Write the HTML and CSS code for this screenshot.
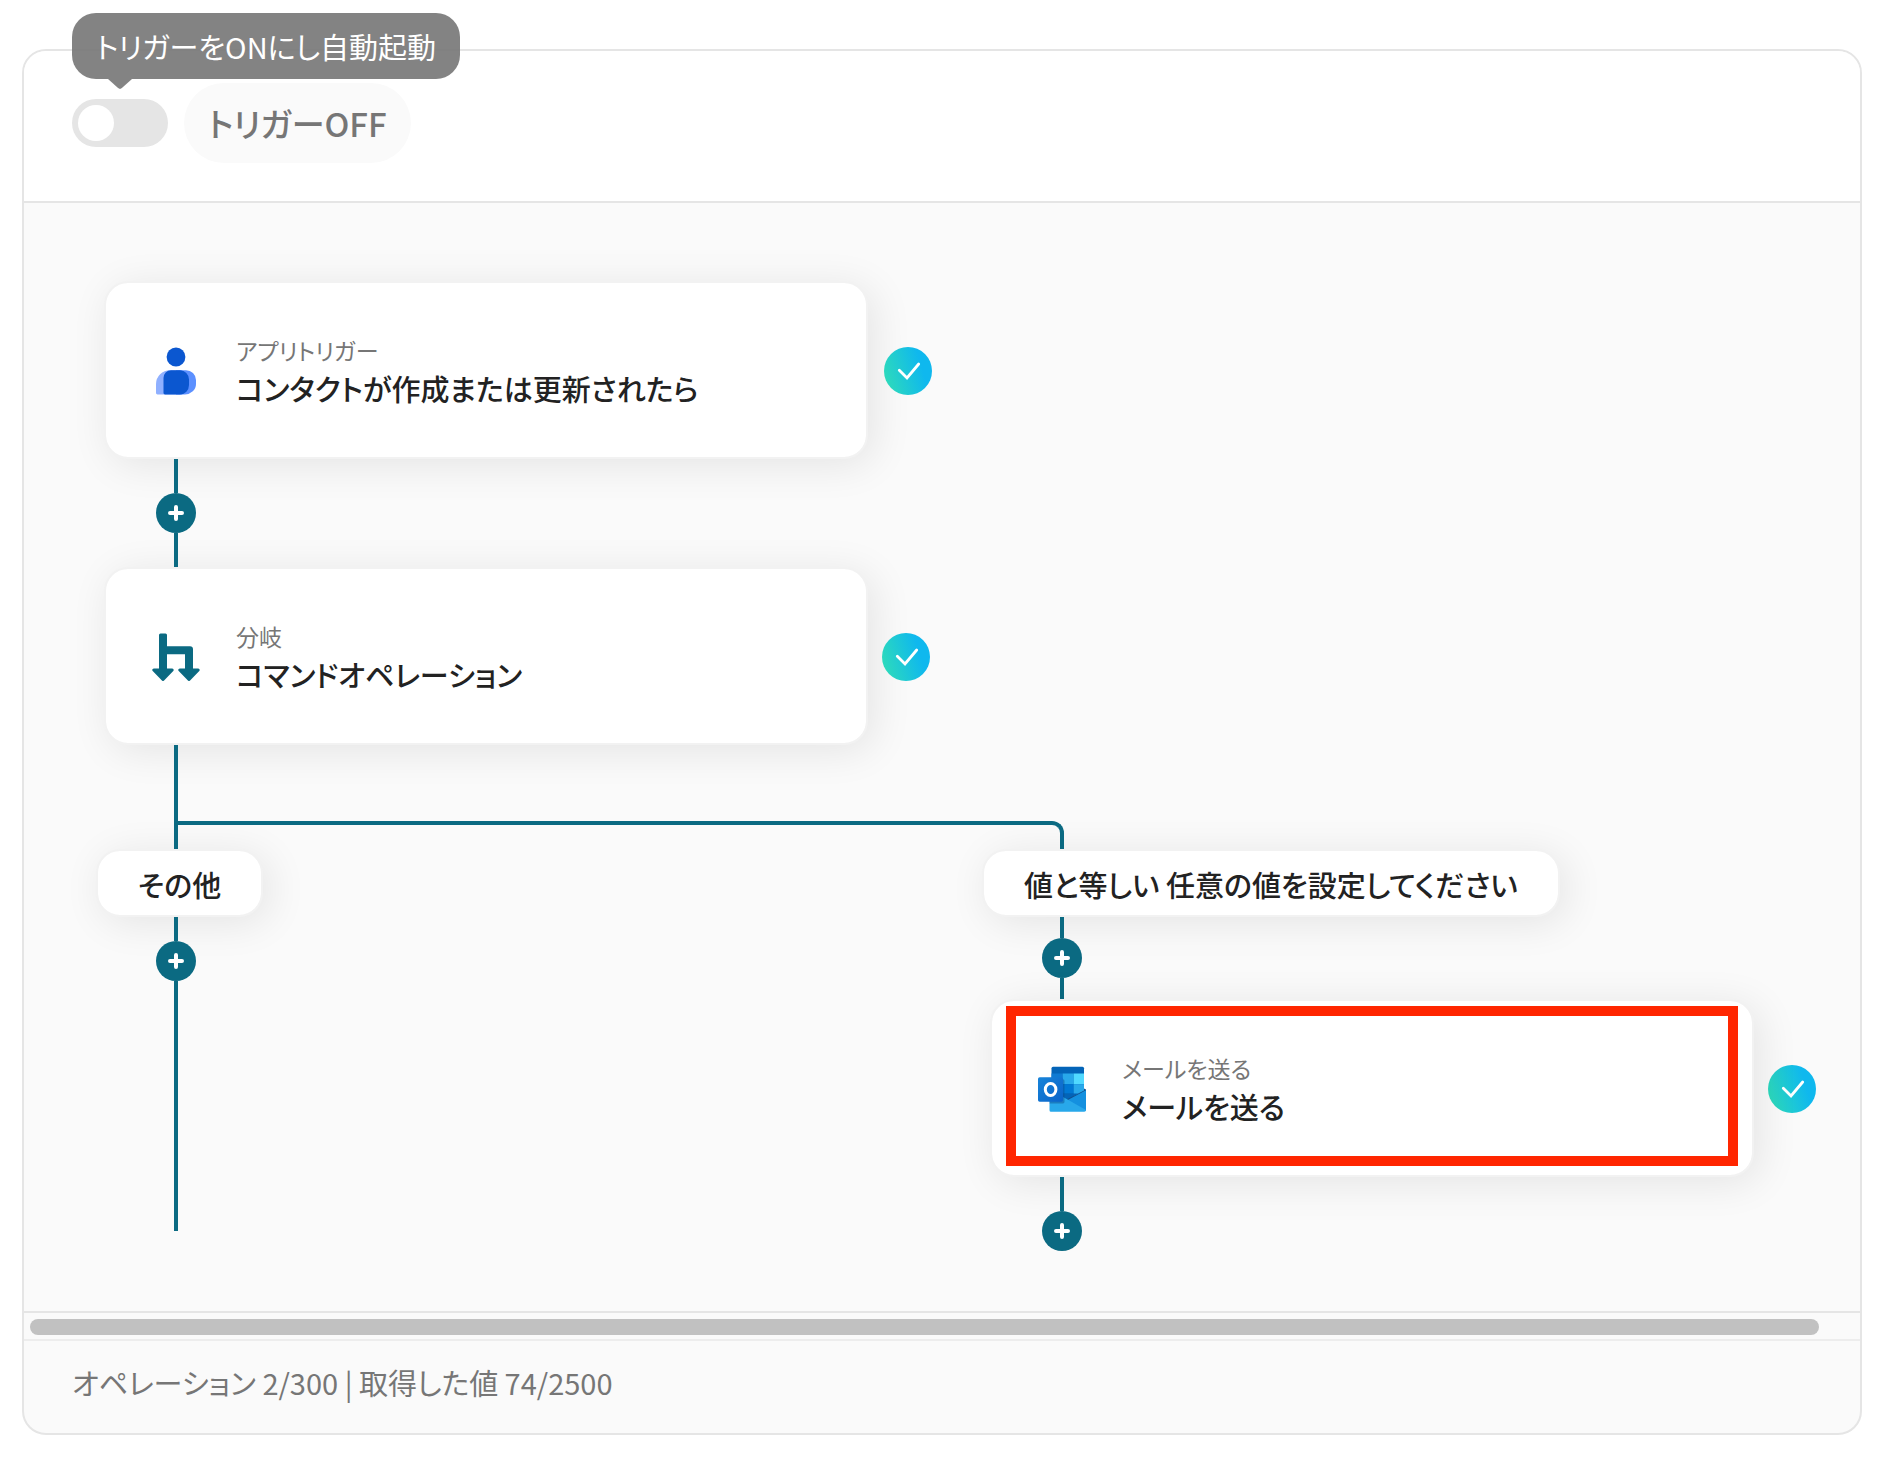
FILE: index.html
```html
<!DOCTYPE html>
<html lang="ja">

<head>
    <meta charset="UTF-8">
    <title>フローボット</title>
    <meta name="viewport" content="width=device-width, initial-scale=1">
    <link rel="stylesheet" href="styles.css">
</head>

<body>

    <!-- shared icons -->
    <svg class="icon-defs" width="0" height="0" aria-hidden="true">
        <defs>
            <linearGradient id="checkGradient" x1="0" y1="0.7" x2="1" y2="0.4">
                <stop offset="0" stop-color="#2edbba" />
                <stop offset="0.8" stop-color="#0fb8ee" />
            </linearGradient>
            <linearGradient id="mailGradient" x1="0" y1="0" x2="1" y2="1">
                <stop offset="0" stop-color="#1784d9" />
                <stop offset="1" stop-color="#0a63c9" />
            </linearGradient>
        </defs>
        <symbol id="check" viewBox="0 0 48 48">
            <circle cx="24" cy="24" r="24" fill="url(#checkGradient)" />
            <path d="M15.3 23.3 L23 31 L34.7 17" fill="none" stroke="#fff" stroke-width="2.8" stroke-linecap="round" stroke-linejoin="miter" />
        </symbol>
        <symbol id="plus" viewBox="0 0 40 40">
            <path d="M20 14 V26 M14 20 H26" fill="none" stroke="#fff" stroke-width="4" stroke-linecap="round" />
        </symbol>
    </svg>

    <main class="panel">
        <header class="panel-header">
            <div class="trigger-switch">
                <input type="checkbox" id="triggerToggle" class="toggle">
                <div class="tooltip" role="tooltip">トリガーをONにし自動起動</div>
            </div>
            <label for="triggerToggle" class="trigger-state">トリガーOFF</label>
        </header>

        <section class="canvas">
            <div class="node-row node-row-trigger">
                <div class="node">
                    <svg class="node-icon" viewBox="0 0 48 48" aria-hidden="true">
                        <circle cx="24" cy="10" r="9.4" fill="#0b57d0" />
                        <path d="M18 23.2 H30 V47.4 H5.5 Q4 47.4 4 46 V37 A14 13.8 0 0 1 18 23.2Z" fill="#8fb0ff" />
                        <path d="M24 23.2 H34 A10 10 0 0 1 44 33 V37 A11 10.4 0 0 1 33 47.4 H24Z" fill="#5c90ff" />
                        <path d="M19 23.2 H28 A9.5 9.5 0 0 1 37 32.5 V38 A9 9.4 0 0 1 28 47.4 H13 Q11.5 47.4 11.5 46 V31 A7.6 7.8 0 0 1 19 23.2Z" fill="#0b57d0" />
                    </svg>
                    <div class="node-text">
                        <p class="node-kind">アプリトリガー</p>
                        <h2 class="node-title">コンタクトが作成または更新されたら</h2>
                    </div>
                </div>
                <svg class="node-status" role="img" aria-label="設定済み"><use href="#check" /></svg>
            </div>

            <div class="connector">
                <span class="line"></span>
                <button type="button" class="add-btn" aria-label="追加"><svg><use href="#plus" /></svg></button>
                <span class="line"></span>
            </div>

            <div class="node-row">
                <div class="node">
                    <svg class="node-icon" viewBox="0 0 48 48" aria-hidden="true">
                        <g fill="#0b6a82" stroke="#0b6a82" stroke-width="3" stroke-linejoin="round">
                            <path d="M8.5 2 H13.5 V14.8 H38 Q39.5 14.8 39.5 16.3 V37 H34.5 V19.8 H13.5 V37 H8.5Z" />
                            <path d="M1.8 37 H20.2 L11 46.5Z" />
                            <path d="M27.8 37 H46.2 L37 46.5Z" />
                        </g>
                    </svg>
                    <div class="node-text">
                        <p class="node-kind">分岐</p>
                        <h2 class="node-title">コマンドオペレーション</h2>
                    </div>
                </div>
                <svg class="node-status" role="img" aria-label="設定済み"><use href="#check" /></svg>
            </div>

            <div class="fork">
                <span class="fork-trunk"></span>
                <span class="fork-elbow"></span>
            </div>

            <div class="branches">
                <div class="branch branch-open">
                    <h3 class="branch-label">その他</h3>
                    <div class="connector connector-long">
                        <span class="line line-start"></span>
                        <button type="button" class="add-btn" aria-label="追加"><svg><use href="#plus" /></svg></button>
                        <span class="line"></span>
                    </div>
                </div>

                <div class="branch">
                    <h3 class="branch-label">値と等しい 任意の値を設定してください</h3>
                    <div class="connector connector-short">
                        <span class="line"></span>
                        <button type="button" class="add-btn" aria-label="追加"><svg><use href="#plus" /></svg></button>
                        <span class="line"></span>
                    </div>
                    <div class="node-row">
                        <div class="node node-selected">
                            <svg class="node-icon" viewBox="0 0 48 48" aria-hidden="true">
                                <path d="M15 1.7 H44.5 Q46 1.7 46 3.2 V30 H13.5 V3.2 Q13.5 1.7 15 1.7Z" fill="#0364b8" />
                                <path d="M13.5 8.5 H24.7 V30 H13.5Z" fill="#0f7ad2" />
                                <path d="M24.7 8.5 H35.7 V19.2 H24.7Z" fill="#28a8ea" />
                                <path d="M35.7 8.5 H46 V19.2 H35.7Z" fill="#50d9ff" />
                                <path d="M24.7 19.2 H35.7 V28.5 H24.7Z" fill="#0078d4" />
                                <path d="M35.7 19.2 H46 V30 H35.7Z" fill="#28a8ea" />
                                <path d="M24.7 28.5 H40 L30 35.5 L24.7 33Z" fill="#0364b8" />
                                <path d="M46 23.5 L48 24.5 V26 L30 36 L28.5 34.5 L46 25.5Z" fill="#12508f" />
                                <path d="M48 25.3 V46 L27.5 35.2 L30.3 34.7Z" fill="#1490df" />
                                <path d="M11.5 28 L24.7 31.8 L48 45 Q48 46.7 46.3 46.7 H13 Q11.5 46.7 11.5 45.2Z" fill="#28a8ea" />
                                <path d="M13.5 14.2 H25 Q26.5 14.2 26.5 15.9 V36.8 Q26.5 38.5 25 38.5 H11.5Z" fill="#0b4a8c" opacity="0.45" />
                                <rect x="0" y="12.2" width="25" height="24.5" rx="1.7" fill="url(#mailGradient)" />
                                <ellipse cx="12.6" cy="24.5" rx="5.3" ry="5.9" fill="none" stroke="#fff" stroke-width="3" />
                            </svg>
                            <div class="node-text">
                                <p class="node-kind">メールを送る</p>
                                <h2 class="node-title">メールを送る</h2>
                            </div>
                        </div>
                        <svg class="node-status" role="img" aria-label="設定済み"><use href="#check" /></svg>
                    </div>
                    <div class="connector connector-end">
                        <span class="line"></span>
                        <button type="button" class="add-btn" aria-label="追加"><svg><use href="#plus" /></svg></button>
                    </div>
                </div>
            </div>
        </section>

        <div class="scroll-track">
            <div class="scroll-thumb"></div>
        </div>

        <footer class="panel-footer">オペレーション 2/300 | 取得した値 74/2500</footer>
    </main>

</body>

</html>
```
FILE: styles.css
```css
* {
    box-sizing: border-box;
}

body {
    margin: 0;
    padding: 49px 20px 23px 22px;
    background: #fff;
    font-family: "Noto Sans CJK JP", sans-serif;
    font-feature-settings: "palt";
    font-size: 29px;
    line-height: 40px;
    color: #222;
}

h2,
h3,
p {
    margin: 0;
}

.icon-defs {
    position: absolute;
}

.panel {
    border: 2px solid #e5e5e5;
    border-radius: 24px;
    background: #fafafa;
}

/* header */

.panel-header {
    display: flex;
    align-items: center;
    gap: 16px;
    padding: 32px 48px 38px;
    border-bottom: 2px solid #e5e5e5;
    border-radius: 22px 22px 0 0;
    background: #fff;
}

.trigger-switch {
    position: relative;
    display: flex;
}

.toggle {
    appearance: none;
    width: 96px;
    height: 48px;
    margin: 0;
    padding: 6px;
    border-radius: 24px;
    background: #e5e5e5;
    cursor: pointer;
}

.toggle::before {
    content: "";
    display: block;
    width: 36px;
    height: 36px;
    border-radius: 50%;
    background: #fff;
}

.toggle:checked {
    background: #0b6a82;
}

.toggle:checked::before {
    margin-left: auto;
}

.tooltip {
    position: absolute;
    left: 0;
    bottom: 68px;
    padding: 13px 24px;
    border-radius: 24px;
    background: rgba(118, 118, 118, 0.9);
    color: #fff;
    white-space: nowrap;
}

.tooltip::after {
    content: "";
    position: absolute;
    left: 36px;
    top: 100%;
    width: 24px;
    height: 10px;
    background: inherit;
    clip-path: polygon(0 0, 100% 0, 58% 90%, 50% 100%, 42% 90%);
}

.trigger-state {
    padding: 20px 24px;
    border-radius: 40px;
    background: #fafafa;
    color: #767676;
    font-size: 33px;
    font-weight: 500;
}

/* flow canvas */

.canvas {
    padding: 78px 0 60px 72px;
    overflow-x: auto;
}

.node-row {
    display: flex;
    align-items: center;
    gap: 14px;
    padding-left: 8px;
}

.node-row-trigger {
    gap: 16px;
}

.node {
    display: flex;
    align-items: center;
    gap: 36px;
    flex: none;
    width: 764px;
    height: 178px;
    padding: 2px 46px 0;
    border: 2px solid #f2f2f2;
    border-radius: 24px;
    background: #fff;
    background-clip: padding-box;
    box-shadow: 6px 6px 40px rgba(0, 0, 0, 0.09);
}

.node-icon {
    flex: none;
    width: 48px;
    height: 48px;
}

.node-text {
    padding-bottom: 2px;
}

.node-kind {
    color: #767676;
    font-size: 23px;
    line-height: 36px;
}

.node-title {
    font-size: 29px;
    font-weight: 500;
}

.node-status {
    flex: none;
    width: 48px;
    height: 48px;
    margin-top: 2px;
}

.node-selected {
    position: relative;
}

.node-selected::after {
    content: "";
    position: absolute;
    inset: 5px 14px 9px;
    border: 10px solid #ff2600;
}

.connector {
    position: relative;
    display: flex;
    flex-direction: column;
    align-items: center;
    width: 40px;
    height: 108px;
    margin-left: 60px;
}

.connector-short {
    height: 82px;
}

.connector-long {
    flex: 1;
}

.connector-end {
    height: 74px;
}

.line {
    flex: 1;
    width: 4px;
    background: #0b6a82;
}

.line-start {
    flex: none;
    height: 24px;
}

.add-btn {
    flex: none;
    width: 40px;
    height: 40px;
    padding: 0;
    border: none;
    border-radius: 50%;
    background: #0b6a82;
    cursor: pointer;
}

.add-btn svg {
    display: block;
    width: 40px;
    height: 40px;
}

.fork {
    position: relative;
    display: flex;
    align-items: flex-end;
    height: 104px;
    padding-left: 78px;
}

.fork-trunk {
    flex: none;
    width: 4px;
    height: 100%;
    background: #0b6a82;
}

.fork-elbow {
    flex: none;
    width: 886px;
    height: 28px;
    border-top: 4px solid #0b6a82;
    border-right: 4px solid #0b6a82;
    border-top-right-radius: 12px;
}

.branches {
    display: grid;
    grid-template-columns: 886px auto;
}

.branch {
    display: flex;
    flex-direction: column;
    align-items: flex-start;
}

.branch-open {
    padding-bottom: 20px;
}

.branch-label {
    padding: 13px 40px 11px;
    border: 2px solid #f2f2f2;
    border-radius: 24px;
    background: #fff;
    background-clip: padding-box;
    box-shadow: 6px 6px 40px rgba(0, 0, 0, 0.09);
    font-size: 29px;
    font-weight: 500;
    white-space: nowrap;
}

/* scrollbar and footer */

.scroll-track {
    padding: 6px 41px 4px 6px;
    border-top: 2px solid #e5e5e5;
    border-bottom: 2px solid #ededed;
}

.scroll-thumb {
    height: 16px;
    border-radius: 8px;
    background: #c1c1c1;
}

.panel-footer {
    padding: 21px 48px 31px;
    color: #767676;
}
```
